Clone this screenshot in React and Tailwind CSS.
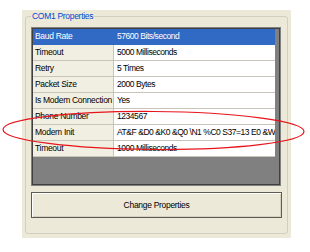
const rows = [
  ["Baud Rate", "57600 Bits/second"],
  ["Timeout", "5000 Milliseconds"],
  ["Retry", "5 Times"],
  ["Packet Size", "2000 Bytes"],
  ["Is Modem Connection", "Yes"],
  ["Phone Number", "1234567"],
  ["Modem Init", "AT&F &D0 &K0 &Q0 \\N1 %C0 S37=13 E0 &W"],
  ["Timeout", "1000 Milliseconds"],
];

function PropertyGrid() {
  return (
    <div className="h-[159px] w-[250px] border border-[#808080] bg-[#808080]">
      <div className="h-full w-full border border-[#404040]">
        {rows.map(([name, value], i) => {
          const selected = i === 0;
          return (
            <div key={i} className="flex h-[16px] w-[242px]">
              <div
                className={
                  selected
                    ? "w-[81px] shrink-0 overflow-hidden whitespace-nowrap border-r border-b border-[#316AC5] bg-[#316AC5] pl-[2px] leading-[15px] text-white"
                    : "w-[81px] shrink-0 overflow-hidden whitespace-nowrap border-r border-b border-[#C8C5B8] bg-[#F1EFE2] pl-[2px] leading-[15px] text-black"
                }
              >
                {name}
              </div>
              <div
                className={
                  selected
                    ? "flex-1 overflow-hidden whitespace-nowrap border-b border-[#316AC5] bg-[#316AC5] pl-[3px] leading-[15px] tracking-[-0.45px] text-white"
                    : "flex-1 overflow-hidden whitespace-nowrap border-b border-[#C8C5B8] bg-white pl-[3px] leading-[15px] tracking-[-0.45px] text-black"
                }
              >
                {value}
              </div>
            </div>
          );
        })}
      </div>
    </div>
  );
}

export default function App() {
  return (
    <div className="relative h-[252px] w-[310px] bg-white pl-[22px] pt-[10px] font-['Liberation_Sans',Arial,sans-serif] text-[8.5px] tracking-[-0.3px]">
      <div className="h-[228px] w-[269px] bg-[#ECE9D8] pl-[3px] pt-[6px]">
        <div className="flex h-[218px] w-[263px] flex-col rounded-[3px] border border-[#D0D0BF] pl-[5px]">
          <div className="-mt-[7px] w-fit bg-[#ECE9D8] px-[1px] leading-[13px] text-[#0046D5]">
            COM1 Properties
          </div>
          <div className="mt-[4px]">
            <PropertyGrid />
          </div>
          <button className="mt-[6px] h-[26px] w-[251px] border border-[#5E5C52] bg-[#ECE9D8] text-black shadow-[inset_1px_1px_0_#FFFFFF,inset_-1px_-1px_0_#D6D2C2]">
            Change Properties
          </button>
        </div>
      </div>
      <svg className="pointer-events-none absolute left-0 top-0" width="310" height="252">
        <ellipse
          cx="153.5"
          cy="130.5"
          rx="150.5"
          ry="19"
          fill="none"
          stroke="#E8141B"
          strokeWidth="1.2"
          transform="rotate(0.4 153.5 130.5)"
        />
      </svg>
    </div>
  );
}
